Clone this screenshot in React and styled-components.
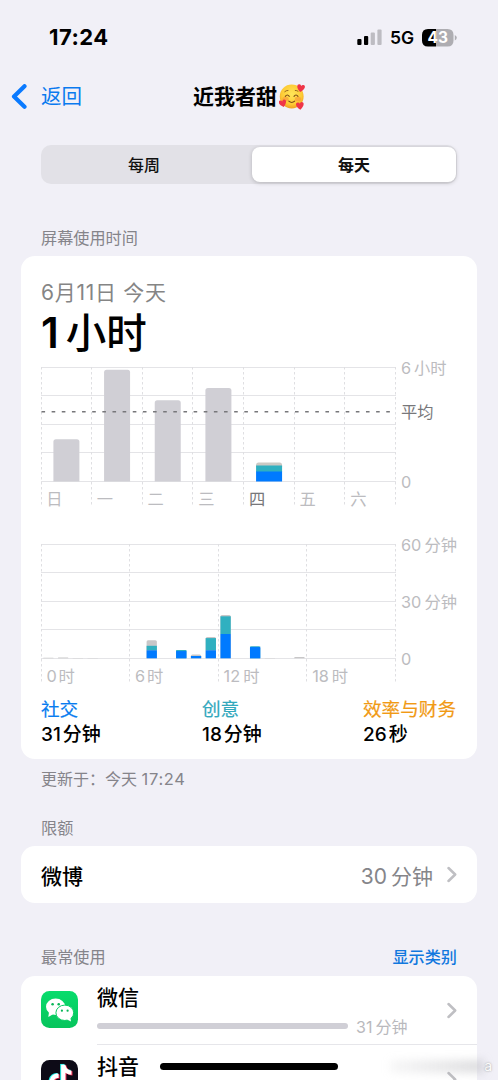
import React from 'react';
import styled, { createGlobalStyle } from 'styled-components';
import { FaTiktok } from 'react-icons/fa';

const GlobalStyle = createGlobalStyle`
  * {
    box-sizing: border-box;
  }

  body {
    margin: 0;
    background: #f1f0f7;
    font-family: Inter, 'Noto Sans CJK SC', sans-serif;
    color: #000;
  }
`;

// --- Page ---
const Screen = styled.main`
  position: relative;
  width: 498px;
  height: 1080px;
  overflow: hidden;
  background: #f1f0f7;
`;

// --- Status bar ---
const StatusBar = styled.div`
  display: flex;
  justify-content: space-between;
  align-items: center;
  height: 75px;
  padding: 0 41px 0 49px;
`;

const Clock = styled.div`
  padding-bottom: 1px;
  font-size: 22px;
  font-weight: 700;
  line-height: 26px;
  letter-spacing: 0.45px;
`;

const StatusIcons = styled.div`
  display: flex;
  align-items: center;
  gap: 8px;
`;

const Network = styled.span`
  font-size: 17.5px;
  font-weight: 600;
  line-height: 20px;
`;

// --- Navigation ---
const NavBar = styled.header`
  display: grid;
  grid-template-columns: 140px 1fr 140px;
  align-items: center;
  height: 43px;
`;

const BackButton = styled.button`
  display: flex;
  align-items: center;
  gap: 13px;
  padding: 1px 0 0 11px;
  border: 0;
  background: none;
  color: #0a7aef;
  font: inherit;
  font-size: 20.5px;
  line-height: 30px;
`;

const PageTitle = styled.h1`
  display: flex;
  align-items: center;
  justify-content: center;
  gap: 2px;
  margin: 0;
  font-size: 21px;
  font-weight: 700;
  line-height: 30px;
`;

// --- Segmented control ---
const Segments = styled.div`
  display: grid;
  grid-template-columns: 1fr 1fr;
  gap: 6px;
  height: 39px;
  margin: 27px 41px 0;
  padding: 2px 1px;
  border-radius: 10px;
  background: #e2e1e7;
`;

const Segment = styled.button`
  border: 0;
  padding: 0;
  border-radius: 8px;
  background: ${(props) => (props.$active ? '#fff' : 'transparent')};
  box-shadow: ${(props) => (props.$active ? '0 1px 4px rgba(0, 0, 0, 0.2)' : 'none')};
  color: #111;
  font: inherit;
  font-size: 16px;
  font-weight: ${(props) => (props.$active ? 700 : 500)};
  line-height: 24px;
`;

// --- Sections ---
const SectionHeader = styled.div`
  display: flex;
  justify-content: space-between;
  margin: ${(props) => props.$top}px 41px 0;
  height: 24px;
  color: #85848a;
  font-size: 16.15px;
  line-height: 24px;
`;

const HeaderLink = styled.a`
  color: #1178de;
  font-weight: 500;
`;

const Card = styled.section`
  margin: ${(props) => props.$top}px 21px 0;
  border-radius: 14px;
  background: #fff;
`;

const UsageCard = styled(Card)`
  height: 503px;
  padding: 22px 0 0 20px;
`;

const DateLine = styled.div`
  height: 30px;
  color: #858585;
  font-size: 21px;
  line-height: 30px;
  letter-spacing: 0.7px;
`;

const Total = styled.div`
  display: flex;
  align-items: baseline;
  gap: 7px;
  height: 50px;
  font-size: 40.5px;
  font-weight: 500;
  line-height: 49px;
`;

const TotalNumber = styled.span`
  font-size: 42px;
  font-weight: 600;
`;

const ChartSvg = styled.svg`
  display: block;
  overflow: visible;
  margin-top: ${(props) => props.$top}px;
`;

const AxisText = styled.text`
  fill: ${(props) => (props.$dark ? '#77777a' : '#bcbcc0')};
  font-size: 16.3px;
`;

const Categories = styled.div`
  display: grid;
  grid-template-columns: 161px 161px 1fr;
  margin-top: 12px;
`;

const CategoryName = styled.div`
  color: ${(props) => props.$color};
  font-size: 18.6px;
  line-height: 26px;
  white-space: nowrap;
  -webkit-text-stroke: 0.2px currentColor;
`;

const CategoryTime = styled.div`
  display: flex;
  align-items: baseline;
  gap: 2px;
  padding-top: 1px;
  font-size: 19px;
  font-weight: 500;
  line-height: 24px;
`;

const Updated = styled.p`
  margin: 8px 41px 0;
  color: #85848a;
  font-size: 16px;
  line-height: 24px;
`;

const UpdatedTime = styled.span`
  font-size: 16.5px;
  letter-spacing: 0.7px;
`;

// --- Rows ---
const LimitRow = styled.div`
  display: flex;
  align-items: center;
  height: 57px;
  padding: 0 20px;
  font-size: 21px;
`;

const LimitName = styled.span`
  flex: 1;
  font-weight: 500;
`;

const LimitValue = styled.span`
  display: flex;
  align-items: baseline;
  gap: 4px;
  margin-right: 14px;
  color: #858589;
`;

const AppRow = styled.div`
  display: flex;
  height: 69px;
  padding-left: 20px;
`;

const AppIcon = styled.div`
  display: flex;
  align-items: center;
  justify-content: center;
  flex: none;
  width: 37px;
  height: 37px;
  margin: 15px 19px 0 0;
`;

const AppBody = styled.div`
  display: flex;
  flex: 1;
  height: 69px;
  padding: 8px 20px 0 0;
  border-bottom: 1px solid #e6e6ea;
`;

const AppInfo = styled.div`
  flex: 1;
`;

const AppName = styled.div`
  height: 28px;
  font-size: 21px;
  font-weight: 500;
  line-height: 28px;
`;

const Usage = styled.div`
  display: flex;
  align-items: center;
  gap: 8px;
  height: 27px;
  color: #b9b9bd;
  font-size: 16px;
`;

const UsageBar = styled.div`
  width: 251px;
  height: 6px;
  border-radius: 3px;
  background: #d0cfd6;
`;

const UsageTime = styled.span`
  display: flex;
  align-items: baseline;
  gap: 3px;
`;

const RowArrow = styled.div`
  padding-top: 18px;
`;

// --- Overlays ---
const HomeIndicator = styled.div`
  position: absolute;
  left: 160px;
  top: 1063px;
  width: 178px;
  height: 7px;
  border-radius: 4px;
  background: #000;
`;

const CornerMark = styled.div`
  position: absolute;
  right: 6px;
  top: 1056px;
  display: flex;
  align-items: center;
  color: #fff;
  font-size: 14px;
  line-height: 20px;
  text-shadow: 0 0 2px #999;
`;

const Smudge = styled.div`
  width: 94px;
  height: 13px;
  background: linear-gradient(90deg, rgba(190, 190, 194, 0.12), rgba(170, 170, 175, 0.4));
  filter: blur(4px);
`;

const weekDays = [
  { label: '日', top: 72.3 },
  { label: '一', top: 2.7 },
  { label: '二', top: 33.3 },
  { label: '三', top: 21 },
  { label: '四', today: true },
  { label: '五' },
  { label: '六' },
];

// Heights in pixels above the baseline, stacked from the bottom up
const hours = [
  { hour: 0, other: 0.5 },
  { hour: 1, other: 0.9 },
  { hour: 2, other: 0.4 },
  { hour: 3, other: 0.4 },
  { hour: 7, social: 8, creative: 4.5, other: 5.5 },
  { hour: 9, social: 7.2, creative: 1 },
  { hour: 10, social: 2.3, other: 1.5 },
  { hour: 11, social: 8, creative: 12.2, other: 1 },
  { hour: 12, social: 24.3, creative: 17.7, other: 1.3 },
  { hour: 14, social: 11.2, creative: 0.6 },
  { hour: 15, other: 0.4 },
  { hour: 17, other: 1.2 },
];

const categories = [
  { name: '社交', color: '#087cf0', value: '31', unit: '分钟' },
  { name: '创意', color: '#32a8bd', value: '18', unit: '分钟' },
  { name: '效率与财务', color: '#f19a14', value: '26', unit: '秒' },
];

const GridLines = ({ columns, bottom }) => (
  <>
    {[0.5, 28.5, 57.5, 85.5, 114.5].map((y) => (
      <line key={y} x1="0" x2="355" y1={y} y2={y} stroke="#e4e4e7" />
    ))}
    {Array.from({ length: columns + 1 }, (_, i) => {
      const x = Math.floor((354.6 / columns) * i) + 0.5;
      return <line key={i} x1={x} x2={x} y1="0" y2={bottom} stroke="#dfdfe2" strokeDasharray="2.5 2.5" />;
    })}
  </>
);

const roundedTop = (x, y, w, bottom, r) =>
  `M${x} ${bottom}V${y + r}Q${x} ${y} ${x + r} ${y}H${x + w - r}Q${x + w} ${y} ${x + w} ${y + r}V${bottom}Z`;

const WeekChart = () => (
  <ChartSvg $top={9} width="437" height="140" viewBox="0 0 437 140">
    <GridLines columns={7} bottom={140} />
    {weekDays.map(({ label, top, today }, i) => {
      const x = 12.4 + i * 50.67;
      return (
        <g key={label}>
          {top && <path d={roundedTop(x, top, 26, 114.5, 2.5)} fill="#d0cfd5" />}
          {today && (
            <>
              <path d={roundedTop(x, 95.5, 26, 100, 2.5)} fill="#cbc9c4" />
              <rect x={x} y="98.5" width="26" height="6.5" fill="#30b0c0" />
              <rect x={x} y="104.5" width="26" height="10" fill="#007aff" />
            </>
          )}
          <AxisText x={5.2 + i * 50.67} y="138" $dark={today}>{label}</AxisText>
        </g>
      );
    })}
    <line x1="0.5" x2="355" y1="44.7" y2="44.7" stroke="#77777a" strokeWidth="1.6" strokeDasharray="3.6 6.54" />
    <AxisText x="360" y="6.5">6</AxisText>
    <AxisText x="373" y="6.5">小时</AxisText>
    <AxisText x="360" y="51" $dark>平均</AxisText>
    <AxisText x="360" y="120.5">0</AxisText>
  </ChartSvg>
);

const DayChart = () => (
  <ChartSvg $top={37} width="437" height="140" viewBox="0 0 437 140">
    <GridLines columns={4} bottom={139} />
    {hours.map(({ hour, social = 0, creative = 0, other = 0 }) => {
      const x = 2.2 + hour * 14.77;
      const total = social + creative + other;
      return (
        <g key={hour}>
          <path
            d={roundedTop(x, 114.3 - total, 10.3, 114.3, Math.min(1.5, total / 2))}
            fill={other ? '#c8c7c8' : '#30a0c8'}
          />
          {creative > 0 && (
            <rect x={x} y={114.3 - social - creative} width="10.3" height={creative} fill="#30b0c0" />
          )}
          {social > 0 && <rect x={x} y={114.3 - social} width="10.3" height={social} fill="#007aff" />}
        </g>
      );
    })}
    {[0, 6, 12, 18].map((hour, i) => (
      <g key={hour}>
        <AxisText x={5.4 + i * 88.6} y="137.5">{hour}</AxisText>
        <AxisText x={(hour > 9 ? 25 : 17.5) + i * 88.6} y="137.5">时</AxisText>
      </g>
    ))}
    <AxisText x="360" y="6.5">60</AxisText>
    <AxisText x="383.5" y="6.5">分钟</AxisText>
    <AxisText x="360" y="63.5">30</AxisText>
    <AxisText x="383.5" y="63.5">分钟</AxisText>
    <AxisText x="360" y="120.5">0</AxisText>
  </ChartSvg>
);

const SignalIcon = () => (
  <svg width="25" height="17" viewBox="0 0 25 17">
    <rect x="0.3" y="10" width="4.2" height="6" rx="1" />
    <rect x="7" y="7" width="4.2" height="9" rx="1" />
    <rect x="13.7" y="3.5" width="4.2" height="12.5" rx="1" fill="#bdbcc2" />
    <rect x="20.4" y="0.5" width="4.2" height="15.5" rx="1" fill="#bdbcc2" />
  </svg>
);

const BatteryIcon = () => (
  <svg width="35" height="18" viewBox="0 0 35 18">
    <path d="M6 0H14V17.5H6Q0 17.5 0 11.5V6Q0 0 6 0Z" />
    <path d="M14 0H25.5Q31.5 0 31.5 6V11.5Q31.5 17.5 25.5 17.5H14Z" fill="#aeadb2" />
    <path d="M32.8 6Q34.8 7 34.8 8.8T32.8 11.5Z" fill="#aeadb2" />
    <text x="15.7" y="14.4" textAnchor="middle" fill="#fff" fontSize="15.5" fontWeight="700">43</text>
  </svg>
);

const HEART = 'M0 3C-4 0 -3.6 -3 -1.6 -3Q-.4 -3 0 -1.8Q.4 -3 1.6 -3C3.6 -3 4 0 0 3Z';

const LoveFace = () => (
  <svg width="26" height="26" viewBox="0 0 26 26">
    <defs>
      <radialGradient id="face" cx="50%" cy="40%" r="60%">
        <stop offset="0" stopColor="#ffe65a" />
        <stop offset="0.7" stopColor="#fdcb35" />
        <stop offset="1" stopColor="#f2a022" />
      </radialGradient>
    </defs>
    <circle cx="12.7" cy="12.5" r="11.9" fill="url(#face)" />
    <ellipse cx="6.5" cy="15" rx="3.2" ry="2.3" fill="#f7953a" opacity="0.6" />
    <ellipse cx="19" cy="15" rx="3.2" ry="2.3" fill="#f7953a" opacity="0.6" />
    <g fill="none" stroke="#7c4a17" strokeWidth="1.1" strokeLinecap="round">
      <path d="M6.3 12.3Q8.3 9.6 10.3 12.3" />
      <path d="M15 12.3Q17 9.6 19 12.3" />
      <path d="M9.8 17.2Q12.7 19.8 15.7 17.2" />
      <path d="M5.8 7.6Q7.3 6.3 9 6.4M16.3 6.4Q17.7 6.3 19 7.2" strokeWidth="0.8" />
    </g>
    <g fill="#ef3548">
      <path d={HEART} transform="translate(21.8 4.3) rotate(10) scale(1.25)" />
      <path d={HEART} transform="translate(3.8 19.5) rotate(-15) scale(1.2)" />
      <path d={HEART} transform="translate(21 22) rotate(-5) scale(1.25)" />
    </g>
  </svg>
);

const BackArrow = () => (
  <svg width="17" height="26" viewBox="0 0 17 26">
    <path d="M13.5 2.2L3 12.5L13.5 22.8" fill="none" stroke="#0a7aff" strokeWidth="4.2" strokeLinecap="round" strokeLinejoin="round" />
  </svg>
);

const ChevronSvg = styled.svg`
  display: block;
`;

const Chevron = () => (
  <ChevronSvg width="10" height="17" viewBox="0 0 10 17">
    <path d="M1.5 2L8.2 8.5L1.5 15" fill="none" stroke="#bfbfc3" strokeWidth="2.5" strokeLinecap="round" strokeLinejoin="round" />
  </ChevronSvg>
);

const WechatIcon = () => (
  <svg width="37" height="37" viewBox="0 0 37 37">
    <defs>
      <linearGradient id="wechat" x1="0" y1="0" x2="0" y2="1">
        <stop offset="0" stopColor="#08dc6c" />
        <stop offset="1" stopColor="#07c45c" />
      </linearGradient>
    </defs>
    <rect width="37" height="37" rx="8.5" fill="url(#wechat)" />
    <ellipse cx="14.6" cy="15.8" rx="9.6" ry="8.2" fill="#fff" />
    <path d="M8 21L7.3 26L12.5 23Z" fill="#fff" />
    <ellipse cx="23.8" cy="21.8" rx="8.9" ry="7.7" fill="#fff" stroke="#08cc62" strokeWidth="1" />
    <path d="M26 28.5L30 30.6L29.4 26.4Z" fill="#fff" />
    <circle cx="11.6" cy="13.3" r="1.3" fill="#07b657" />
    <circle cx="17.7" cy="13.3" r="1.3" fill="#07b657" />
    <circle cx="20.9" cy="19.7" r="1.1" fill="#07b657" />
    <circle cx="26.6" cy="19.7" r="1.1" fill="#07b657" />
  </svg>
);

const DouyinIcon = () => (
  <svg width="37" height="37" viewBox="0 0 37 37">
    <rect width="37" height="37" rx="8.5" fill="#0d0b17" />
    <FaTiktok x="6" y="3.8" size="25" color="#25f4ee" />
    <FaTiktok x="8" y="5.2" size="25" color="#fe2c55" />
    <FaTiktok x="7" y="4.5" size="25" color="#fff" />
  </svg>
);

const App = () => (
  <>
    <GlobalStyle />
    <Screen>
      <StatusBar>
        <Clock>17:24</Clock>
        <StatusIcons>
          <SignalIcon />
          <Network>5G</Network>
          <BatteryIcon />
        </StatusIcons>
      </StatusBar>

      <NavBar>
        <BackButton>
          <BackArrow />
          返回
        </BackButton>
        <PageTitle>
          近我者甜
          <LoveFace />
        </PageTitle>
      </NavBar>

      <Segments>
        <Segment>每周</Segment>
        <Segment $active>每天</Segment>
      </Segments>

      <SectionHeader $top={42}>屏幕使用时间</SectionHeader>
      <UsageCard $top={6}>
        <DateLine>6月11日 今天</DateLine>
        <Total>
          <TotalNumber>1</TotalNumber>
          <span>小时</span>
        </Total>
        <WeekChart />
        <DayChart />
        <Categories>
          {categories.map(({ name, color, value, unit }) => (
            <div key={name}>
              <CategoryName $color={color}>{name}</CategoryName>
              <CategoryTime>
                <span>{value}</span>
                <span>{unit}</span>
              </CategoryTime>
            </div>
          ))}
        </Categories>
      </UsageCard>
      <Updated>
        更新于：今天 <UpdatedTime>17:24</UpdatedTime>
      </Updated>

      <SectionHeader $top={25}>限额</SectionHeader>
      <Card $top={6}>
        <LimitRow>
          <LimitName>微博</LimitName>
          <LimitValue>
            <span>30</span>
            <span>分钟</span>
          </LimitValue>
          <Chevron />
        </LimitRow>
      </Card>

      <SectionHeader $top={42}>
        <span>最常使用</span>
        <HeaderLink>显示类别</HeaderLink>
      </SectionHeader>
      <Card $top={7}>
        <AppRow>
          <AppIcon>
            <WechatIcon />
          </AppIcon>
          <AppBody>
            <AppInfo>
              <AppName>微信</AppName>
              <Usage>
                <UsageBar />
                <UsageTime>
                  <span>31</span>
                  <span>分钟</span>
                </UsageTime>
              </Usage>
            </AppInfo>
            <RowArrow>
              <Chevron />
            </RowArrow>
          </AppBody>
        </AppRow>
        <AppRow>
          <AppIcon>
            <DouyinIcon />
          </AppIcon>
          <AppBody>
            <AppInfo>
              <AppName>抖音</AppName>
            </AppInfo>
            <RowArrow>
              <Chevron />
            </RowArrow>
          </AppBody>
        </AppRow>
      </Card>

      <CornerMark>
        <Smudge />
        a
      </CornerMark>
      <HomeIndicator />
    </Screen>
  </>
);

export default App;
